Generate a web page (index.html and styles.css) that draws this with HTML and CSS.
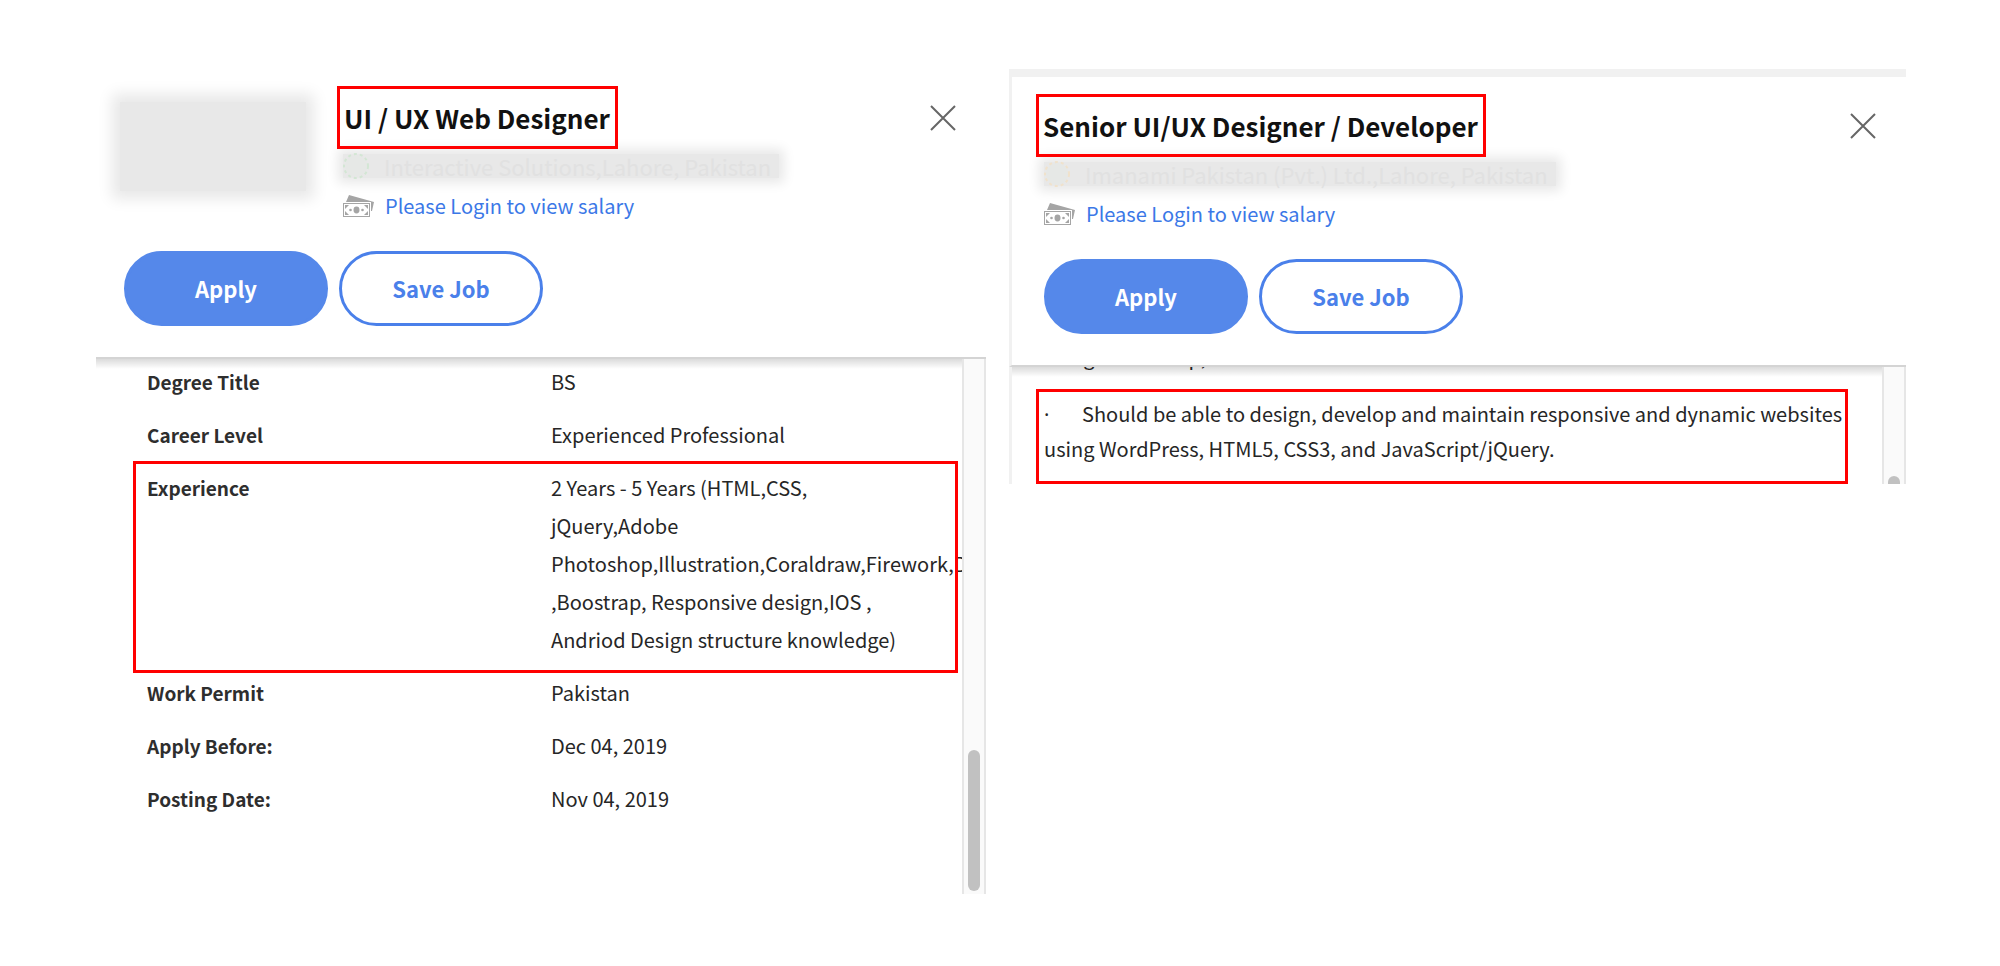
FILE: index.html
```html
<!DOCTYPE html>
<html lang="en">
<head>
  <meta charset="UTF-8">
  <title>Job Details</title>
  <link rel="stylesheet" href="styles.css">
</head>
<body>

  <main class="jobs">

    <section class="job">
      <header class="job-header">
        <div class="job-top">
          <div class="logo"></div>
          <div class="job-info">
            <h2 class="job-title marked">UI / UX Web Designer</h2>
            <p class="company">
              <svg class="badge badge-green" viewBox="0 0 26 26" aria-hidden="true">
                <circle cx="13" cy="13" r="11" />
                <circle class="badge-edge" cx="13" cy="13" r="12" />
              </svg>
              <span>Interactive Solutions,Lahore, Pakistan</span>
            </p>
            <p class="salary">
              <svg class="money" viewBox="0 0 31 23" aria-hidden="true">
                <path d="M6 0l25 7-2 9-1 0V7H3z" />
                <path fill-rule="evenodd" d="M0 8h27v14H0zM1 9v12h25V9z" />
                <path d="M2 10h4l-4 4zM25 10h-4l4 4zM2 20h4l-4-4zM25 20h-4l4-4z" />
                <ellipse cx="13.5" cy="15" rx="3" ry="3.4" />
                <circle cx="7.5" cy="15" r="1.3" />
                <circle cx="19.5" cy="15" r="1.3" />
              </svg>
              <a href="#">Please Login to view salary</a>
            </p>
          </div>
          <button class="close" type="button" aria-label="Close">
            <svg viewBox="0 0 26 26"><path d="M1 1l24 24M25 1L1 25" /></svg>
          </button>
        </div>
        <div class="actions">
          <button class="btn btn-apply" type="button">Apply</button>
          <button class="btn btn-save" type="button">Save Job</button>
        </div>
      </header>

      <div class="job-body">
        <div class="content">
          <table class="details">
            <tr><th scope="row">Degree Title</th><td>BS</td></tr>
            <tr><th scope="row">Career Level</th><td>Experienced Professional</td></tr>
            <tr class="marked-row"><th scope="row">Experience</th><td>2 Years - 5 Years (HTML,CSS, jQuery,Adobe Photoshop,Illustration,Coraldraw,Firework,Dreamweaver ,Boostrap, Responsive design,IOS , Andriod Design structure knowledge)</td></tr>
            <tr><th scope="row">Work Permit</th><td>Pakistan</td></tr>
            <tr><th scope="row">Apply Before:</th><td>Dec 04, 2019</td></tr>
            <tr><th scope="row">Posting Date:</th><td>Nov 04, 2019</td></tr>
          </table>
        </div>
        <div class="scrollbar"><div class="thumb"></div></div>
      </div>
    </section>

    <section class="job job-framed">
      <header class="job-header">
        <div class="job-top">
          <div class="job-info">
            <h2 class="job-title marked">Senior UI/UX Designer / Developer</h2>
            <p class="company">
              <svg class="badge badge-gold" viewBox="0 0 26 26" aria-hidden="true">
                <circle cx="13" cy="13" r="11" />
                <circle class="badge-edge" cx="13" cy="13" r="12" />
              </svg>
              <span>Imanami Pakistan (Pvt.) Ltd.,Lahore, Pakistan</span>
            </p>
            <p class="salary">
              <svg class="money" viewBox="0 0 31 23" aria-hidden="true">
                <path d="M6 0l25 7-2 9-1 0V7H3z" />
                <path fill-rule="evenodd" d="M0 8h27v14H0zM1 9v12h25V9z" />
                <path d="M2 10h4l-4 4zM25 10h-4l4 4zM2 20h4l-4-4zM25 20h-4l4-4z" />
                <ellipse cx="13.5" cy="15" rx="3" ry="3.4" />
                <circle cx="7.5" cy="15" r="1.3" />
                <circle cx="19.5" cy="15" r="1.3" />
              </svg>
              <a href="#">Please Login to view salary</a>
            </p>
          </div>
          <button class="close" type="button" aria-label="Close">
            <svg viewBox="0 0 26 26"><path d="M1 1l24 24M25 1L1 25" /></svg>
          </button>
        </div>
        <div class="actions">
          <button class="btn btn-apply" type="button">Apply</button>
          <button class="btn btn-save" type="button">Save Job</button>
        </div>
      </header>

      <div class="job-body">
        <div class="content description">
          <p class="scrolled">using Photoshop,</p>
          <p class="marked requirement"><span class="dot">·</span>Should be able to design, develop and maintain responsive and dynamic websites using WordPress, HTML5, CSS3, and JavaScript/jQuery.</p>
        </div>
        <div class="scrollbar"><div class="thumb thumb-cut"></div></div>
      </div>
    </section>

  </main>

</body>
</html>
```

FILE: styles.css
```css
* {
  box-sizing: border-box;
}

body {
  margin: 0;
  background: #fff;
  color: #262626;
  font-family: 'Noto Sans CJK SC', 'Noto Sans', sans-serif;
  font-size: 20px;
}

h2,
p {
  margin: 0;
}

.jobs {
  display: grid;
  grid-template-columns: 890fr 897fr;
  align-items: start;
  gap: 23px;
  padding: 69px 94px 0 96px;
}

.job-framed {
  border-top: 8px solid #f1f1f1;
}

.job-framed .job-header,
.job-framed .content {
  border-left: 3px solid #f1f1f1;
}

/* header */
.job-header {
  position: relative;
  z-index: 1;
  padding: 17px 30px 31px 16px;
  background: #fff;
  border-bottom: 2px solid #d4d4d4;
}

/* stops short of the scrollbar */
.job-header::after {
  content: "";
  position: absolute;
  top: calc(100% + 2px);
  left: 0;
  right: 24px;
  height: 10px;
  background: linear-gradient(rgba(0, 0, 0, 0.14), rgba(0, 0, 0, 0));
}

.job-framed .job-header {
  padding-left: 24px;
}

.job-top {
  display: flex;
  align-items: flex-start;
}

.logo {
  width: 186px;
  height: 89px;
  margin: 16px 31px 0 8px;
  background: #e8e8e8;
  box-shadow: 0 0 14px 8px #e8e8e8;
}

.job-info {
  flex: 1;
}

.marked {
  position: relative;
  border: 3px solid #f00;
}

.job-title {
  z-index: 1;
  width: fit-content;
  padding: 0 5px 0 4px;
  color: #111;
  font-size: 26px;
  font-weight: 700;
  line-height: 57px;
}

.company {
  display: flex;
  align-items: center;
  gap: 15px;
  width: fit-content;
  height: 24px;
  margin: 5px 0 0 6px;
  padding-right: 8px;
  background: #e8e8e8;
  box-shadow: 0 0 12px 5px #e8e8e8;
  color: #e1e1e1;
  font-size: 22px;
}

.badge {
  width: 26px;
  height: 26px;
  fill: #e6e8e6;
}

.badge-edge {
  fill: none;
  stroke-width: 2;
  stroke-dasharray: 3 3;
}

.badge-green .badge-edge {
  stroke: #d3e6d4;
}

.badge-gold .badge-edge {
  stroke: #f0e2cc;
}

.salary {
  display: flex;
  align-items: center;
  gap: 11px;
  margin: 11px 0 0 6px;
  line-height: 34px;
}

.salary a {
  color: #3b78e7;
  text-decoration: none;
}

.job-framed .company,
.job-framed .salary {
  margin-left: 8px;
}

.money {
  width: 31px;
  height: 23px;
  fill: #a5a5a5;
}

.close {
  margin-top: 19px;
  padding: 0;
  border: none;
  background: none;
  cursor: pointer;
}

.close svg {
  display: block;
  width: 26px;
  height: 26px;
  fill: none;
  stroke: #666;
  stroke-width: 2;
}

.actions {
  display: flex;
  gap: 11px;
  margin: 28px 0 0 12px;
}

.job-framed .actions {
  margin-left: 8px;
}

.btn {
  width: 204px;
  height: 75px;
  padding: 0 0 2px;
  border: 3px solid #4a80ea;
  border-radius: 38px;
  background: #fff;
  color: #4a80ea;
  font-family: inherit;
  font-size: 22px;
  font-weight: 700;
  cursor: pointer;
}

.btn-apply {
  border-color: #5588ea;
  background: #5588ea;
  color: #fff;
}

/* body */
.job-body {
  display: flex;
  overflow: hidden;
}

.content {
  flex: 1;
  min-width: 0;
  overflow: hidden;
}

.details {
  width: 808px;
  margin: -3px 0 68px 37px;
  border-collapse: collapse;
  table-layout: fixed;
}

.details th,
.details td {
  padding: 7px 28px 8px 14px;
  line-height: 38px;
  text-align: left;
  vertical-align: top;
}

.details th {
  color: #2e2e2e;
  font-size: 19px;
}

.marked-row {
  position: relative;
}

.marked-row th::after {
  content: "";
  position: absolute;
  inset: -1px -17px -6px 0;
  border: 3px solid #f00;
}

.description {
  padding: 0 34px 0 24px;
  line-height: 34px;
}

.scrolled {
  margin: -27px 0 15px 8px;
}

.requirement {
  padding: 5px 0 15px 5px;
}

.dot {
  display: inline-block;
  width: 38px;
  font-family: 'Noto Sans', sans-serif;
}

.scrollbar {
  display: flex;
  flex-direction: column;
  justify-content: flex-end;
  align-items: center;
  width: 24px;
  background: #fafafa;
  border: solid #e6e6e6;
  border-width: 0 2px;
  overflow: hidden;
}

.thumb {
  width: 12px;
  height: 141px;
  margin-bottom: 3px;
  border-radius: 6px;
  background: #c1c1c1;
}

/* most of this thumb lies below the fold */
.thumb-cut {
  flex-shrink: 0;
  margin-bottom: -133px;
}
```
